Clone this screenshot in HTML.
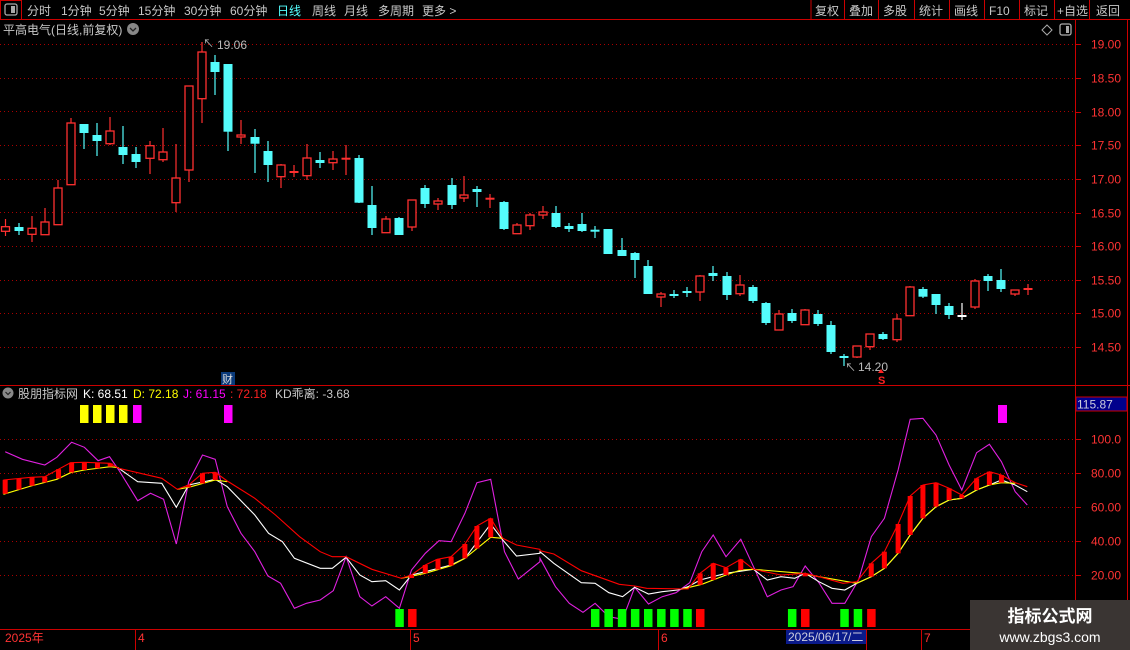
<!DOCTYPE html>
<html><head><meta charset="utf-8">
<style>
html,body{margin:0;padding:0;background:#000;width:1130px;height:650px;overflow:hidden}
svg{display:block}
text{font-family:"Liberation Sans","Noto Sans CJK SC",sans-serif}
</style></head>
<body>
<svg id="s" width="1130" height="650" viewBox="0 0 1130 650" xmlns="http://www.w3.org/2000/svg">
<rect width="1130" height="650" fill="#000"/>
<!-- toolbar -->
<line x1="0" y1="19.5" x2="1130" y2="19.5" stroke="#c00" stroke-width="1"/>
<rect x="0.5" y="0.5" width="21" height="19" fill="none" stroke="#c00"/>
<rect x="5" y="4" width="12" height="11" rx="2" fill="none" stroke="#aaa" stroke-width="1.3"/>
<rect x="11" y="6" width="4" height="7" fill="#aaa"/>
<g font-size="12" fill="#c8c8c8">
<text x="27" y="15">分时</text><text x="61" y="15">1分钟</text><text x="99" y="15">5分钟</text>
<text x="138" y="15">15分钟</text><text x="184" y="15">30分钟</text><text x="230" y="15">60分钟</text>
<text x="277" y="15" fill="#5ff">日线</text><text x="312" y="15">周线</text><text x="344" y="15">月线</text>
<text x="378" y="15">多周期</text><text x="422" y="15">更多 &gt;</text>
<text x="815" y="15">复权</text><text x="849" y="15">叠加</text><text x="883" y="15">多股</text>
<text x="919" y="15">统计</text><text x="954" y="15">画线</text><text x="989" y="15">F10</text>
<text x="1024" y="15">标记</text><text x="1057" y="15">+自选</text><text x="1096" y="15">返回</text>
</g>
<g stroke="#c00"><line x1="811" y1="0" x2="811" y2="19"/><line x1="844.5" y1="0" x2="844.5" y2="19"/><line x1="878.5" y1="0" x2="878.5" y2="19"/><line x1="914.5" y1="0" x2="914.5" y2="19"/><line x1="949.5" y1="0" x2="949.5" y2="19"/><line x1="984.5" y1="0" x2="984.5" y2="19"/><line x1="1019.5" y1="0" x2="1019.5" y2="19"/><line x1="1054.5" y1="0" x2="1054.5" y2="19"/><line x1="1089.5" y1="0" x2="1089.5" y2="19"/></g>
<text x="3" y="34" font-size="12" fill="#c8c8c8">平高电气(日线,前复权)</text>
<circle cx="133" cy="29" r="6" fill="#888"/><path d="M130 28 L133 31 L136 28" stroke="#222" stroke-width="1.3" fill="none"/>
<path d="M1047 25 L1052 30 L1047 35 L1042 30 Z" fill="none" stroke="#aaa"/>
<rect x="1060" y="24" width="11" height="11" rx="2" fill="none" stroke="#aaa" stroke-width="1.3"/><rect x="1066" y="26" width="3" height="7" fill="#aaa"/>
<!-- axes -->
<line x1="1075.5" y1="19" x2="1075.5" y2="650" stroke="#c00"/>
<line x1="1127.5" y1="19" x2="1127.5" y2="650" stroke="#c00"/>
<line x1="0" y1="385.5" x2="1130" y2="385.5" stroke="#c00"/>
<line x1="0" y1="629.5" x2="1130" y2="629.5" stroke="#c00"/>
<g id="grid" stroke="#a00" stroke-dasharray="1,3" stroke-width="1"></g>
<g id="axl" font-size="12" fill="#f33"></g>
<rect x="1076" y="397" width="51" height="14" fill="#00008c" stroke="#c00"/>
<text x="1077" y="408.5" font-size="12" fill="#ccd">115.87</text>
<g id="cdl"></g>
<text x="203" y="47" font-size="11" fill="#bbb">↖</text><text x="217" y="49" font-size="12" fill="#bbb">19.06</text>
<text x="845" y="371" font-size="11" fill="#bbb">↖</text><text x="858" y="371" font-size="12" fill="#bbb">14.20</text>
<rect x="221" y="372" width="14" height="13" fill="#0a3a7a"/><text x="222" y="383" font-size="11" fill="#ddd">财</text>
<path d="M881 369 L884 373 L878 373 Z" fill="#f22"/><text x="878" y="384" font-size="11" font-weight="bold" fill="#f22">S</text>
<!-- indicator header -->
<circle cx="8" cy="393" r="5.5" fill="#888"/><path d="M5.5 392 L8 394.5 L10.5 392" stroke="#222" stroke-width="1.2" fill="none"/>
<g font-size="12"><text x="18" y="398" fill="#c8c8c8">股朋指标网</text><text x="83" y="398" fill="#fff">K: 68.51</text>
<text x="133" y="398" fill="#ff0">D: 72.18</text><text x="183" y="398" fill="#f0f">J: 61.15</text>
<text x="230" y="398" fill="#f22">: 72.18</text><text x="275" y="398" fill="#c8c8c8">KD乖离: -3.68</text></g>
<g fill="#ff0"><rect x="80" y="405" width="8.5" height="18"/><rect x="93" y="405" width="8.5" height="18"/><rect x="106" y="405" width="8.5" height="18"/><rect x="119" y="405" width="8.5" height="18"/></g>
<g fill="#f0f"><rect x="133" y="405" width="8.5" height="18"/><rect x="224" y="405" width="8.5" height="18"/><rect x="998" y="405" width="9" height="18"/></g>
<g id="ind"></g>
<!-- bottom axis -->
<g stroke="#c00"><line x1="135.5" y1="629" x2="135.5" y2="650"/><line x1="410.5" y1="629" x2="410.5" y2="650"/><line x1="658.5" y1="629" x2="658.5" y2="650"/><line x1="921.5" y1="629" x2="921.5" y2="650"/><line x1="866.5" y1="629" x2="866.5" y2="650"/></g>
<g font-size="12" fill="#f33"><text x="5" y="642">2025年</text><text x="138" y="642">4</text><text x="413" y="642">5</text><text x="661" y="642">6</text><text x="924" y="642">7</text></g>
<rect x="786" y="630" width="80" height="14" fill="#0a1a8a"/><text x="788" y="641" font-size="12" fill="#ccd">2025/06/17/二</text>
<!-- watermark -->
<rect x="970" y="600" width="160" height="50" fill="#3a3533"/>
<text x="1050" y="622" font-size="17" font-weight="bold" fill="#fff" text-anchor="middle">指标公式网</text>
<text x="1050" y="642" font-size="14" fill="#fff" text-anchor="middle">www.zbgs3.com</text>
</svg>
<script>
var NS="http://www.w3.org/2000/svg";
function el(p,t,a){var e=document.createElementNS(NS,t);for(var k in a)e.setAttribute(k,a[k]);p.appendChild(e);return e;}
var g=document.getElementById('grid');
[44,78,111,145,179,212,246,280,313,347].forEach(function(y){el(g,'line',{x1:0,y1:y+.5,x2:1075,y2:y+.5});});
[439,473,507,541,575].forEach(function(y){el(g,'line',{x1:0,y1:y+.5,x2:1075,y2:y+.5});});
var ax=document.getElementById('axl');
var pl=[["19.00",44],["18.50",78],["18.00",112],["17.50",145],["17.00",179],["16.50",213],["16.00",246],["15.50",280],["15.00",313],["14.50",347],["100.0",439],["80.00",473],["60.00",507],["40.00",541],["20.00",575]];
pl.forEach(function(p){var t=el(ax,'text',{x:1091,y:p[1]+4.5});t.textContent=p[0];el(ax,'line',{x1:1076,y1:p[1]+.5,x2:1081,y2:p[1]+.5,stroke:'#c00'});});
var C=[[5.5,226.7,231.3,219,236,'r'],[19,227,231,223,235,'c'],[32,228.3,234.3,216,242,'r'],[45,222,234.7,208,234.7,'r'],[58,188,224.7,180,225,'r'],[71,123,184.7,118,185,'r'],[84,124,133,124,149,'c'],[97,135,141,123,156,'c'],[110,131,143.7,117,145,'r'],[123,147,155,126,164,'c'],[136,154,162,147,168,'c'],[150,145.7,158.3,141,174,'r'],[163,152,159.7,128,162,'r'],[176,178,202.7,144,212,'r'],[189,86,170,86,182,'r'],[202,52,98.7,42,123,'r'],[215,62,72,55,95,'c'],[228,64,131.7,64,151,'c'],[241,135,137,120,144,'r'],[255,137,143.7,129,173,'c'],[268,151,165,141,182,'c'],[281,165,176.7,164,188,'r'],[294,172,172,165,177,'r'],[307,158,175.7,144,180,'r'],[320,160,163,152,168,'c'],[333,159,162.7,151,170,'r'],[346,158.7,158.7,145,175,'r'],[359,158,202.7,155,203,'c'],[372,205,228,186,235,'c'],[386,219,232.7,216,232.7,'r'],[399,218,235,217,235,'c'],[412,200,227,200,231,'r'],[425,188,204,185,208,'c'],[438,201,204,198,210,'r'],[452,185,205,178,209,'c'],[464,195,198,176,202,'r'],[477,189,192,186,207,'c'],[490,198.7,198.7,194,208,'r'],[504,202,229,201,230,'c'],[517,225,233.7,223,233.7,'r'],[530,215,225.7,213,230,'r'],[543,212,215,206,219,'r'],[556,213,227,206,228,'c'],[569,226,229,223,232,'c'],[582,224,231,213,232,'c'],[595,230.7,230.7,226,238,'c'],[608,229,254,229,254,'c'],[622,250,256,238,256,'c'],[635,253,260,252,278,'c'],[648,266,294,260,294,'c'],[661,294,297,292,307,'r'],[674,294,296,290,298,'c'],[687,292,292,287,297,'c'],[700,276,292,275,301,'r'],[713,273,276,266,281,'c'],[727,276,295,272,300,'c'],[740,285,293.7,275,296,'r'],[753,287,301,285,303,'c'],[766,303,323,302,325,'c'],[779,314,330,310,330,'r'],[792,313,321,309,323,'c'],[805,310,324.7,309,325,'r'],[818,314,324,310,326,'c'],[831,325,352,321,354,'c'],[844,357,357,354,366,'c'],[857,346,357,346,358,'r'],[870,334,346.7,334,350,'r'],[883,334,339,332,340,'c'],[897,319,339.7,314,342,'r'],[910,287,315.7,286,316,'r'],[923,289,296.7,287,298,'c'],[936,294,305,294,314,'c'],[949,306,315,303,319,'c'],[962,316,316,303,320,'w'],[975,281,307,279,309,'r'],[988,276,281,274,291,'c'],[1001,280,289,269,292,'c'],[1015,290,294,290,296,'r'],[1028,289,289,284,295,'r']];
var cg=document.getElementById('cdl');
C.forEach(function(c){var x=c[0],col=c[5]=='r'?'#ff3030':(c[5]=='c'?'#54fcfc':'#fff');
el(cg,'line',{x1:x,y1:c[3],x2:x,y2:c[4],stroke:col,'stroke-width':1.2});
if(c[2]-c[1]<1.5){el(cg,'line',{x1:x-4.5,y1:c[1],x2:x+4.5,y2:c[1],stroke:col,'stroke-width':2});}
else if(c[5]=='r'){el(cg,'rect',{x:x-4,y:c[1],width:8,height:c[2]-c[1],fill:'#000',stroke:col,'stroke-width':1.3});}
else{el(cg,'rect',{x:x-4.5,y:c[1],width:9,height:c[2]-c[1],fill:col});}
});
var sx=2.904,sy=3;
function T(a,ox){return a.map(function(p){return [ox+p[0]/sx,400+p[1]/sy];});}
var mag=T([[15,155],[65,178],[130,195],[165,172],[208,127],[245,142],[285,182],[318,170],[345,210],[400,302],[437,280],[475,298],[512,432],[548,245],[588,165],[625,178],[660,320],[700,400],[740,455],[778,528],[815,550],[855,625],[890,610],[930,600],[968,572],[1005,470],[1045,590],[1080,618],[1120,590],[1160,625],[1195,510],[1235,460],[1275,422],[1310,425],[1350,340],[1385,248],[1425,238],[1465,455],[1505,537],[1568,485]],0).concat(T([[0,475],[45,560],[85,610],[125,637],[160,610],[200,650],[240,658],[275,562],[315,612],[355,590],[395,578],[435,548],[470,455],[503,405],[540,470],[583,418],[620,500],[660,590],[700,570],[735,560],[770,498],[810,548],[848,610],[885,610],[925,540],[962,410],[1000,355],[1040,210],[1075,58],[1112,55],[1150,105],[1188,195],[1225,270],[1268,158],[1305,133],[1340,185],[1380,275],[1415,315]],540));
var red=T([[10,240],[90,232],[130,230],[205,188],[245,187],[320,190],[345,205],[470,235],[515,268],[548,255],[588,220],[625,217],[660,243],[740,295],[800,345],[870,410],[930,455],[965,470],[1005,470],[1080,508],[1165,535],[1195,525],[1235,495],[1270,478],[1310,470],[1350,432],[1385,378],[1425,355],[1460,415],[1500,435],[1568,448]],0).concat(T([[0,452],[40,462],[120,512],[230,553],[275,558],[310,565],[430,567],[465,520],[503,490],[540,503],[583,478],[620,508],[700,525],[770,520],[810,530],[880,550],[920,545],[962,490],[1000,455],[1040,372],[1075,288],[1112,255],[1150,248],[1188,265],[1225,285],[1268,235],[1305,215],[1340,225],[1380,248],[1415,260]],540));
var wht=T([[345,205],[400,245],[470,250],[512,322],[548,255],[625,238],[660,260],[740,345],[780,400],[820,425],[855,475],[930,505],[965,505],[1005,472],[1045,525],[1080,545],[1120,542],[1160,570],[1195,525],[1235,515],[1310,495],[1350,475],[1425,372],[1460,420],[1500,468],[1568,460]],0).concat(T([[0,455],[40,490],[120,548],[160,550],[200,578],[240,590],[275,562],[315,582],[355,575],[400,570],[430,560],[465,540],[540,520],[620,508],[660,540],[700,530],[740,535],[770,520],[810,545],[848,565],[885,570],[920,550],[962,530],[1000,505],[1040,460],[1075,405],[1112,355],[1150,320],[1188,300],[1225,295],[1268,270],[1305,255],[1340,240],[1380,255],[1415,275]],540));
var yl=[T([[10,283],[90,258],[165,238],[205,218],[245,210],[320,200],[345,203]],0),T([[515,268],[548,262],[625,240],[660,245]],0),T([[1165,535],[1235,520],[1310,497],[1350,475],[1425,412],[1460,415]],0),T([[410,568],[470,553],[540,525],[583,510],[620,508],[760,520],[810,530],[920,550],[962,530],[1000,505],[1040,460],[1075,405],[1112,355],[1150,320],[1188,300],[1225,295],[1268,270],[1305,255],[1340,248],[1380,250]],540)];
function interp(pts,x){for(var i=0;i<pts.length-1;i++){if(x>=pts[i][0]&&x<=pts[i+1][0]){var t=(x-pts[i][0])/(pts[i+1][0]-pts[i][0]||1);return pts[i][1]+t*(pts[i+1][1]-pts[i][1]);}}return null;}
var ig=document.getElementById('ind');
function poly(p,col){el(ig,'polyline',{points:p.map(function(q){return q[0].toFixed(1)+','+q[1].toFixed(1);}).join(' '),fill:'none',stroke:col,'stroke-width':1.1});}
var bars=[15,55,93,130,170,208,245,283,320,548,588,625,1195,1235,1272,1310,1350,1385,1425].map(function(v){return v/sx;}).concat([465,503,540,583,770,962,1000,1040,1075,1112,1150,1188,1225,1268,1305,1340].map(function(v){return 540+v/sx;}));
var allY=[].concat.apply([],yl);
poly(mag,'#e020e0');poly(wht,'#fff');
yl.forEach(function(s){poly(s,'#ff0');});
bars.forEach(function(x){var yr=interp(red,x),yy=null;for(var k=0;k<yl.length;k++){var v=interp(yl[k],x);if(v!==null){yy=v;break;}}if(yr===null||yy===null)return;var a=Math.min(yr,yy),b=Math.max(yr,yy);if(b-a<2)b=a+3;el(ig,'rect',{x:x-2.5,y:a,width:5,height:b-a,fill:'#f00'});});
poly(red,'#f00');
var gb=[[1148,'g',0],[1185,'r',0],[148,'g',540],[187,'g',540],[226,'g',540],[264,'g',540],[302,'g',540],[340,'g',540],[378,'g',540],[416,'g',540],[453,'r',540],[720,'g',540],[758,'r',540],[872,'g',540],[911,'g',540],[950,'r',540]];
gb.forEach(function(b){el(ig,'rect',{x:b[2]+b[0]/sx,y:609,width:8.5,height:18,fill:b[1]=='g'?'#0f0':'#f00'});});
</script>
</body></html>
